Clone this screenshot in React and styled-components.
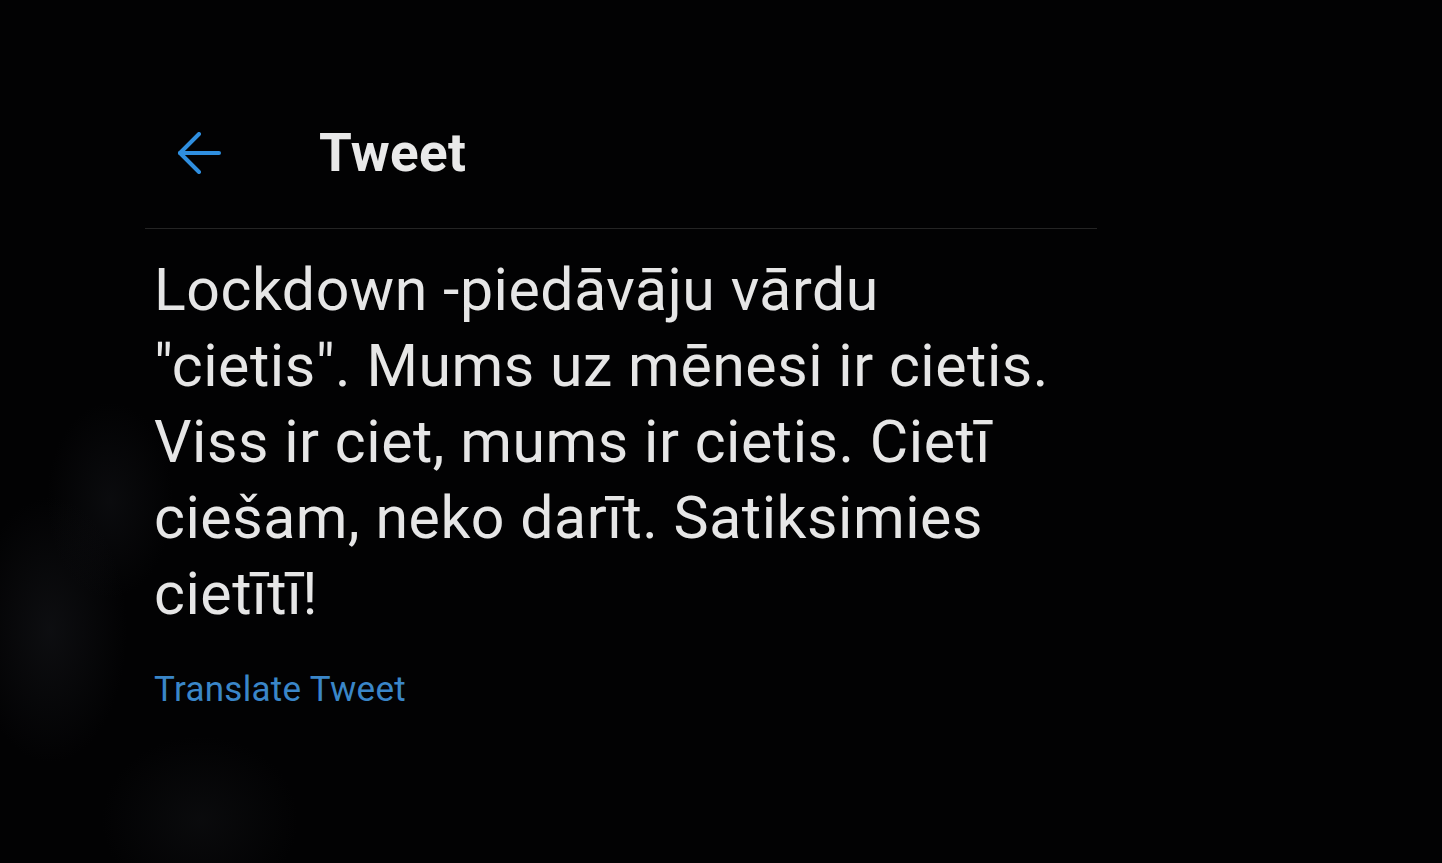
import React from 'react';
import styled, { createGlobalStyle } from 'styled-components';

/* styled components start */

const GlobalStyle = createGlobalStyle`
  html, body {
    margin: 0;
    padding: 0;
    background: #000;
  }
  body {
    font-family: Roboto, "Noto Sans", "Liberation Sans", sans-serif;
    color: #e7e7e7;
  }
`;

const Screen = styled.div`
  width: 1442px;
  height: 863px;
  overflow: hidden;
  background:
    radial-gradient(ellipse 110px 190px at 50px 630px, rgba(34, 36, 42, 0.35), transparent 70%),
    radial-gradient(ellipse 90px 140px at 110px 500px, rgba(30, 32, 38, 0.3), transparent 70%),
    radial-gradient(ellipse 140px 120px at 200px 820px, rgba(28, 30, 34, 0.3), transparent 70%),
    #020203;
`;

const Column = styled.div`
  width: 952px;
  margin-left: 145px;
  padding-top: 86px;
`;

const Header = styled.div`
  display: flex;
  align-items: center;
  height: 134px;
  padding-bottom: 8px;
  padding-left: 32px;
  border-bottom: 1px solid #242424;
`;

const BackButton = styled.div`
  width: 142px;
  display: flex;
  align-items: center;
  color: #2f8fe0;
`;

const Title = styled.h1`
  margin: 0;
  font-size: 53px;
  font-weight: 700;
  color: #e9e9e9;
  letter-spacing: 0.3px;
`;

const Body = styled.p`
  margin: 23px 0 0;
  padding-left: 9px;
  font-size: 59px;
  line-height: 76px;
  letter-spacing: 0.55px;
  color: #e6e6e6;
`;

const Translate = styled.a`
  display: block;
  margin-top: 37px;
  padding-left: 9px;
  font-size: 35px;
  line-height: 42px;
  letter-spacing: 0.3px;
  color: #3a86c8;
  text-decoration: none;
`;

/* styled components end */

const App = () => {
  return (
    <Screen>
      <GlobalStyle />
      <Column>
        <Header>
          <BackButton>
            <svg width="44" height="42" viewBox="0 0 44 42" fill="none"
              stroke="currentColor" strokeWidth="4" strokeLinecap="round" strokeLinejoin="round">
              <path d="M42 21H3" />
              <path d="M22 2L3 21l19 19" />
            </svg>
          </BackButton>
          <Title>Tweet</Title>
        </Header>

        <Body>
          Lockdown -piedāvāju vārdu<br />
          "cietis". Mums uz mēnesi ir cietis.<br />
          Viss ir ciet, mums ir cietis. Cietī<br />
          ciešam, neko darīt. Satiksimies<br />
          cietītī!
        </Body>

        <Translate href="#">Translate Tweet</Translate>
      </Column>
    </Screen>
  );
};

export default App;
